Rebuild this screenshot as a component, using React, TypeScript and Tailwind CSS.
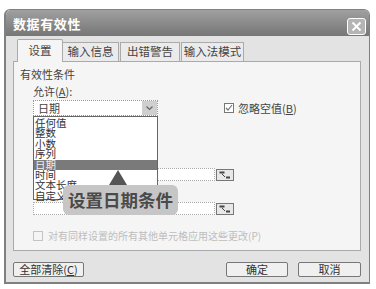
import React from 'react';

const listItems = ['任何值', '整数', '小数', '序列', '日期', '时间', '文本长度', '自定义'];

function RefButton() {
  return (
    <div className="w-[18px] h-[12px] border border-[#777] bg-[#e8e8e8] flex items-center justify-center">
      <svg width="12" height="8" viewBox="0 0 12 8">
        <rect x="0.5" y="0.5" width="5" height="2" fill="#444" />
        <path d="M3 3 L6 6" stroke="#444" strokeWidth="1" />
        <rect x="7" y="5.5" width="4" height="2" fill="#444" />
      </svg>
    </div>
  );
}

export default function App() {
  return (
    <div className="w-[376px] h-[289px] bg-white pl-[4px] pt-[9px] font-['Noto_Sans_CJK_SC','Noto_Sans',sans-serif] overflow-hidden">
      <div className="w-[366px] h-[275px] rounded-t-[6px] border border-[#808080] border-l-[2px] border-b-[2px] bg-[#e3e3e3] flex flex-col">
        {/* Title bar */}
        <div className="h-[26px] rounded-t-[5px] bg-gradient-to-b from-[#a0a0a0] to-[#767676] flex items-center justify-between pl-[7px] pr-[3px]">
          <span className="text-white font-bold text-[13px] tracking-[0.6px] leading-none">数据有效性</span>
          <div className="w-[19px] h-[17px] mt-[6px] rounded-[3px] border border-white bg-[#b4b4b4] flex items-center justify-center">
            <svg width="11" height="11" viewBox="0 0 11 11">
              <path d="M1.5 1.5 L9.5 9.5 M9.5 1.5 L1.5 9.5" stroke="white" strokeWidth="1.8" />
            </svg>
          </div>
        </div>

        <div className="px-[7px] pt-[3px] flex flex-col">
          {/* Tabs */}
          <div className="flex items-end h-[22px] pl-[4px] text-[11.5px] text-[#444] leading-none">
            <div className="w-[46px] h-[23px] -mb-[1px] relative z-10 bg-[#f5f5f5] border border-b-0 border-[#aaa] rounded-t-[2px] flex items-center justify-center">设置</div>
            <div className="w-[56px] h-[19px] bg-[#ebebeb] border-t border-r border-[#aaa] flex items-center justify-center">输入信息</div>
            <div className="w-[60px] h-[19px] ml-[1px] bg-[#ebebeb] border-t border-x border-[#aaa] flex items-center justify-center">出错警告</div>
            <div className="w-[63px] h-[19px] ml-[1px] bg-[#ebebeb] border-t border-x border-[#aaa] flex items-center justify-center">输入法模式</div>
          </div>

          {/* Panel */}
          <div className="relative w-[348px] h-[190px] bg-[#f5f5f5] border border-[#aaa] text-[11px] text-[#444] leading-[12px]">
            <div className="pt-[6px] pl-[6px]">有效性条件</div>
            <div className="flex">
              <div className="pl-[19px] flex flex-col">
                <div className="mt-[5px]">允许(<span className="underline">A</span>):</div>
                <div className="mt-[3px] w-[125px] h-[16px] border border-dotted border-[#999] bg-white flex items-center justify-between pl-[4px]">
                  <span>日期</span>
                  <div className="w-[15px] h-[14px] bg-[#cfcfcf] flex items-center justify-center">
                    <svg width="7" height="5" viewBox="0 0 7 5">
                      <path d="M0.5 0.5 L3.5 3.5 L6.5 0.5" stroke="#666" strokeWidth="1.2" fill="none" />
                    </svg>
                  </div>
                </div>
              </div>
              <div className="ml-[66px] mt-[22px] flex items-center gap-[4px] h-[12px]">
                <div className="w-[10px] h-[10px] border border-[#777] bg-white flex items-center justify-center">
                  <svg width="8" height="8" viewBox="0 0 8 8">
                    <path d="M1 4 L3 6 L7 1" stroke="#777" strokeWidth="1.2" fill="none" />
                  </svg>
                </div>
                <span>忽略空值(<span className="underline">B</span>)</span>
              </div>
            </div>

            {/* Data fields */}
            <div className="pl-[19px] mt-[52px] flex items-end gap-[1px]">
              <div className="w-[182px] h-[13px] border border-dotted border-[#aaa] bg-white" />
              <RefButton />
            </div>
            <div className="pl-[19px] mt-[21px] flex items-end gap-[1px]">
              <div className="w-[182px] h-[13px] border border-dotted border-[#aaa] bg-white" />
              <RefButton />
            </div>

            <div className="pl-[19px] mt-[15px] flex items-center gap-[5px] text-[10px] text-[#bdbdbd]">
              <div className="w-[10px] h-[10px] border border-[#c4c4c4]" />
              <span>对有同样设置的所有其他单元格应用这些更改(P)</span>
            </div>

            {/* Open dropdown list */}
            <div className="absolute left-[19px] top-[54px] w-[125px] h-[84px] bg-white border border-[#666] pt-[1px] text-[10.5px] leading-[10.4px] text-[#333]">
              {listItems.map((item) => (
                <div
                  key={item}
                  className={item === '日期' ? 'h-[10.4px] pl-[1px] bg-[#7a7a7a] text-[#eee]' : 'h-[10.4px] pl-[1px]'}
                >
                  {item}
                </div>
              ))}
            </div>

            {/* Callout */}
            <svg className="absolute left-[95px] top-[108px]" width="18" height="15" viewBox="0 0 18 15">
              <path d="M9 0 L18 15 L0 15 Z" fill="#555" />
            </svg>
            <div className="absolute left-[49px] top-[123px] w-[115px] h-[30px] rounded-[6px] bg-[#c6c6c6] flex items-center justify-center text-[17.5px] font-bold text-[#4a4a4a] leading-none">
              设置日期条件
            </div>
          </div>

          {/* Buttons */}
          <div className="flex items-center mt-[11px] text-[11px] text-[#333] leading-none">
            <div className="w-[71px] h-[15px] border border-[#777] rounded-[2px] bg-[#f0f0f0] flex items-center justify-center">全部清除(<span className="underline">C</span>)</div>
            <div className="ml-[142px] w-[62px] h-[15px] border border-[#777] rounded-[2px] bg-[#f0f0f0] flex items-center justify-center">确定</div>
            <div className="ml-[10px] w-[63px] h-[15px] border border-[#777] rounded-[2px] bg-[#f0f0f0] flex items-center justify-center">取消</div>
          </div>
        </div>
      </div>
    </div>
  );
}
